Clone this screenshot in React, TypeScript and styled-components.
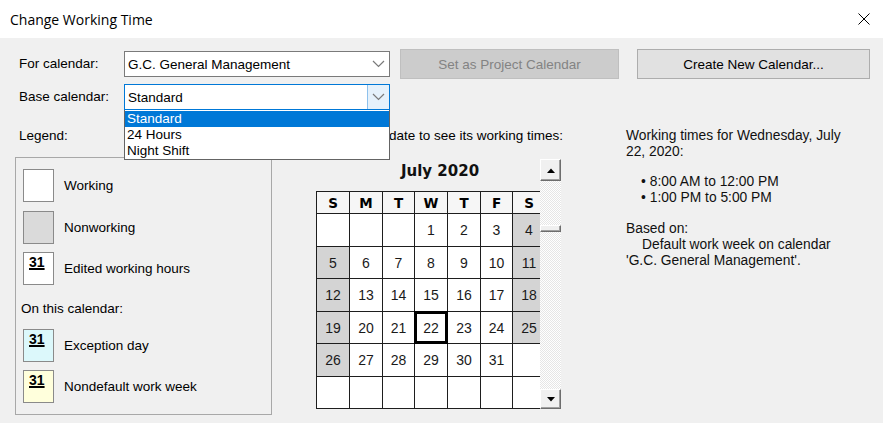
import React from 'react';
import styled, { createGlobalStyle } from 'styled-components';

const GlobalStyle = createGlobalStyle`
  html, body {
    margin: 0;
    padding: 0;
    background: #f0f0f0;
  }
  body {
    font-family: 'Liberation Sans', Arial, sans-serif;
    font-size: 13.5px;
    color: #000;
  }
  * {
    box-sizing: border-box;
  }
`;

type DayKind = 'empty' | 'work' | 'off';
interface Day {
  n?: number;
  kind: DayKind;
  today?: boolean;
}

const WEEKDAYS = ['S', 'M', 'T', 'W', 'T', 'F', 'S'];
const COL_WIDTHS = '32px 32px 31px 32px 32px 31px 32px';
const ROW_HEIGHTS = '21px 32px 31px 32px 31px 32px 31px';

// July 2020 starts on a Wednesday
const buildMonth = (): Day[] => {
  const cells: Day[] = [];
  for (let i = 0; i < 42; i++) {
    const n = i - 2;
    const col = i % 7;
    if (n < 1 || n > 31) {
      cells.push({ kind: 'empty' });
    } else {
      cells.push({ n, kind: col === 0 || col === 6 ? 'off' : 'work', today: n === 22 });
    }
  }
  return cells;
};

const Chevron = () => (
  <svg width="13" height="8" viewBox="0 0 13 8">
    <path d="M1 1 L6.5 6.5 L12 1" fill="none" stroke="#7a7a7a" strokeWidth="1.2" />
  </svg>
);

const CloseIcon = () => (
  <svg width="12" height="12" viewBox="0 0 12 12">
    <path d="M0.5 0.5 L11.5 11.5 M11.5 0.5 L0.5 11.5" stroke="#000" strokeWidth="1" />
  </svg>
);

const Arrow = ({ up }: { up?: boolean }) => (
  <svg width="8" height="5" viewBox="0 0 8 5">
    <path d={up ? 'M0 5 L4 0.5 L8 5 Z' : 'M0 0 L8 0 L4 4.5 Z'} fill="#000" />
  </svg>
);

export default function App() {
  const days = buildMonth();

  return (
    <Window>
      <GlobalStyle />
      <TitleBar>
        <span>Change Working Time</span>
        <CloseIcon />
      </TitleBar>

      <Body>
        <TopForm>
          <FieldLabel>For calendar:</FieldLabel>
          <Combo>
            <ComboText>G.C. General Management</ComboText>
            <ComboButton>
              <Chevron />
            </ComboButton>
          </Combo>
          <PushButton disabled>Set as Project Calendar</PushButton>
          <PushButton>Create New Calendar...</PushButton>

          <FieldLabel>Base calendar:</FieldLabel>
          <Combo $focused>
            <ComboText>Standard</ComboText>
            <ComboButton $focused>
              <Chevron />
            </ComboButton>
            <DropList>
              <DropItem $selected>Standard</DropItem>
              <DropItem>24 Hours</DropItem>
              <DropItem>Night Shift</DropItem>
            </DropList>
          </Combo>
        </TopForm>

        <Lower>
          <LegendColumn>
            <FieldLabel>Legend:</FieldLabel>
            <LegendBox>
              <LegendRow>
                <Swatch $variant="work" />
                <span>Working</span>
              </LegendRow>
              <LegendRow $gap={9}>
                <Swatch $variant="off" />
                <span>Nonworking</span>
              </LegendRow>
              <LegendRow $gap={8}>
                <Swatch $variant="work">
                  <SwatchNum>31</SwatchNum>
                </Swatch>
                <span>Edited working hours</span>
              </LegendRow>
              <SubHeading>On this calendar:</SubHeading>
              <LegendRow $gap={12}>
                <Swatch $variant="exception">
                  <SwatchNum>31</SwatchNum>
                </Swatch>
                <span>Exception day</span>
              </LegendRow>
              <LegendRow $gap={8}>
                <Swatch $variant="nondefault">
                  <SwatchNum>31</SwatchNum>
                </Swatch>
                <span>Nondefault work week</span>
              </LegendRow>
            </LegendBox>
          </LegendColumn>

          <CalendarColumn>
            <HintLabel>
              <span>Click on a date to see its working times:</span>
            </HintLabel>
            <CalendarPane>
              <MonthTitle>July 2020</MonthTitle>
              <GridClip>
                <DayGrid>
                  {WEEKDAYS.map((d, i) => (
                    <HeadCell key={i}>{d}</HeadCell>
                  ))}
                  {days.map((d, i) => (
                    <DayCell key={i} $kind={d.kind} $today={d.today}>
                      {d.n}
                    </DayCell>
                  ))}
                </DayGrid>
              </GridClip>
              <ScrollBar>
                <ScrollButton>
                  <Arrow up />
                </ScrollButton>
                <ScrollTrack>
                  <ScrollThumb />
                </ScrollTrack>
                <ScrollButton $bottom>
                  <Arrow />
                </ScrollButton>
              </ScrollBar>
            </CalendarPane>
          </CalendarColumn>

          <InfoColumn>
            <p>Working times for Wednesday, July 22, 2020:</p>
            <TimeList>
              <li>8:00 AM to 12:00 PM</li>
              <li>1:00 PM to 5:00 PM</li>
            </TimeList>
            <p>Based on:</p>
            <IndentedText>Default work week on calendar 'G.C. General Management'.</IndentedText>
          </InfoColumn>
        </Lower>
      </Body>
    </Window>
  );
}

const Window = styled.div`
  width: 883px;
  height: 423px;
  display: flex;
  flex-direction: column;
  background: #f0f0f0;
  overflow: hidden;
`;

const TitleBar = styled.div`
  height: 38px;
  flex-shrink: 0;
  display: flex;
  align-items: center;
  justify-content: space-between;
  padding: 0 13px 0 10px;
  background: #fff;
  font-family: 'Open Sans', 'Noto Sans', sans-serif;
  font-size: 14px;
  color: #000;
`;

const Body = styled.div`
  padding: 11px 13px 0 15px;
`;

const TopForm = styled.div`
  display: grid;
  grid-template-columns: 109px 266px 229px 251px;
  grid-template-rows: 30px 26px;
  row-gap: 5px;
  align-items: center;
`;

const FieldLabel = styled.div`
  padding-left: 4px;
  line-height: 16px;
  white-space: nowrap;
`;

const Combo = styled.div<{ $focused?: boolean }>`
  position: relative;
  height: 26px;
  display: flex;
  align-items: stretch;
  background: #fff;
  border: 1px solid ${(p) => (p.$focused ? '#0078d7' : '#7a7a7a')};
`;

const ComboText = styled.div`
  flex: 1;
  display: flex;
  align-items: center;
  padding-left: 3px;
  white-space: nowrap;
`;

const ComboButton = styled.div<{ $focused?: boolean }>`
  width: 22px;
  display: flex;
  align-items: center;
  justify-content: center;
  background: ${(p) => (p.$focused ? '#e5f1fb' : 'transparent')};
  border-left: 1px solid ${(p) => (p.$focused ? '#8ec1ec' : 'transparent')};
`;

const DropList = styled.div`
  position: absolute;
  top: calc(100% + 1px);
  left: -1px;
  right: -1px;
  z-index: 5;
  background: #fff;
  border: 1px solid #646464;
  border-top: none;
  padding-top: 1px;
`;

const DropItem = styled.div<{ $selected?: boolean }>`
  height: 16px;
  line-height: 16px;
  padding-left: 2px;
  background: ${(p) => (p.$selected ? '#0078d7' : '#fff')};
  color: ${(p) => (p.$selected ? '#fff' : '#000')};
`;

const PushButton = styled.button`
  justify-self: end;
  width: ${(p) => (p.disabled ? '219px' : '233px')};
  height: 30px;
  font-family: 'Liberation Sans', Arial, sans-serif;
  font-size: 13.5px;
  background: ${(p) => (p.disabled ? '#cccccc' : '#e1e1e1')};
  border: 1px solid ${(p) => (p.disabled ? '#bfbfbf' : '#adadad')};
  color: ${(p) => (p.disabled ? '#838383' : '#000')};
  padding: 0;
`;

const Lower = styled.div`
  display: flex;
  margin-top: 18px;
`;

const LegendColumn = styled.div`
  width: 257px;
  flex-shrink: 0;
`;

const LegendBox = styled.div`
  margin-top: 13px;
  height: 258px;
  border: 1px solid #a8a8a8;
  padding: 11px 0 0 7px;
`;

const LegendRow = styled.div<{ $gap?: number }>`
  display: flex;
  align-items: center;
  gap: 10px;
  margin-top: ${(p) => p.$gap ?? 0}px;
`;

const swatchBg: Record<string, string> = {
  work: '#ffffff',
  off: '#dadada',
  exception: '#dcf8fb',
  nondefault: '#ffffdc',
};

const Swatch = styled.div<{ $variant: string }>`
  width: 31px;
  height: 33px;
  flex-shrink: 0;
  border: 1px solid #8a8a8a;
  background: ${(p) => swatchBg[p.$variant]};
  padding: 1px 0 0 5px;
`;

const SwatchNum = styled.span`
  font-weight: bold;
  font-size: 14px;
  line-height: 16px;
  text-decoration: underline;
  text-decoration-thickness: 1.5px;
  text-underline-offset: 1px;
`;

const SubHeading = styled.div`
  margin: 16px 0 0 -2px;
  line-height: 16px;
`;

const CalendarColumn = styled.div`
  width: 249px;
  margin-left: 44px;
  flex-shrink: 0;
`;

const HintLabel = styled.div`
  display: flex;
  justify-content: flex-end;
  padding-right: 2px;
  line-height: 16px;
  white-space: nowrap;
`;

const CalendarPane = styled.div`
  margin-top: 15px;
  display: grid;
  grid-template-columns: 224px 21px;
  grid-template-rows: 32px 218px;
`;

const MonthTitle = styled.div`
  grid-column: 1;
  grid-row: 1;
  display: flex;
  align-items: center;
  justify-content: center;
  padding: 0 0 8px 24px;
  font-family: 'DejaVu Sans', Verdana, sans-serif;
  font-weight: bold;
  font-size: 15px;
  color: #111;
`;

const GridClip = styled.div`
  grid-column: 1;
  grid-row: 2;
  overflow: hidden;
`;

const DayGrid = styled.div`
  display: grid;
  width: max-content;
  grid-template-columns: ${COL_WIDTHS};
  grid-template-rows: ${ROW_HEIGHTS};
  gap: 1px;
  padding: 1px;
  background: #1e1e1e;
`;

const HeadCell = styled.div`
  display: flex;
  align-items: center;
  justify-content: center;
  background: #f6f6f6;
  font-family: 'DejaVu Sans', Verdana, sans-serif;
  font-weight: bold;
  font-size: 13.5px;
  color: #000;
`;

const DayCell = styled.div<{ $kind: DayKind; $today?: boolean }>`
  display: flex;
  align-items: center;
  justify-content: center;
  background: ${(p) => (p.$kind === 'off' ? '#d4d4d4' : '#fff')};
  font-size: 14px;
  color: #1a1a1a;
  box-shadow: ${(p) => (p.$today ? '0 0 0 1px #000, inset 0 0 0 2px #000' : 'none')};
`;

const ScrollBar = styled.div`
  grid-column: 2;
  grid-row: 1 / 3;
  display: flex;
  flex-direction: column;
  background-color: #fff;
  background-image: repeating-conic-gradient(#e6e6e6 0 25%, #fff 0 50%);
  background-size: 2px 2px;
`;

const ScrollButton = styled.div<{ $bottom?: boolean }>`
  height: ${(p) => (p.$bottom ? 20 : 22)}px;
  flex-shrink: 0;
  display: flex;
  align-items: center;
  justify-content: center;
  background: #f0f0f0;
  border-top: 1px solid #fff;
  border-left: 1px solid #fff;
  border-right: 1px solid #6d6d6d;
  border-bottom: 1px solid #6d6d6d;
  box-shadow: inset -1px -1px 0 #a0a0a0;
`;

const ScrollTrack = styled.div`
  flex: 1;
  padding-top: 44px;
`;

const ScrollThumb = styled.div`
  height: 7px;
  background: #f0f0f0;
  border-top: 1px solid #fff;
  border-left: 1px solid #fff;
  border-right: 1px solid #6d6d6d;
  border-bottom: 1px solid #6d6d6d;
  box-shadow: inset -1px -1px 0 #a0a0a0;
`;

const InfoColumn = styled.div`
  width: 230px;
  margin-left: 61px;
  line-height: 16px;
  font-size: 13.8px;
  color: #111;

  p {
    margin: 0;
  }
`;

const TimeList = styled.ul`
  list-style: none;
  margin: 14px 0 15px 0;
  padding: 0 0 0 15px;

  li::before {
    content: '•';
    margin-right: 4px;
  }
`;

const IndentedText = styled.p`
  text-indent: 16px;
`;
